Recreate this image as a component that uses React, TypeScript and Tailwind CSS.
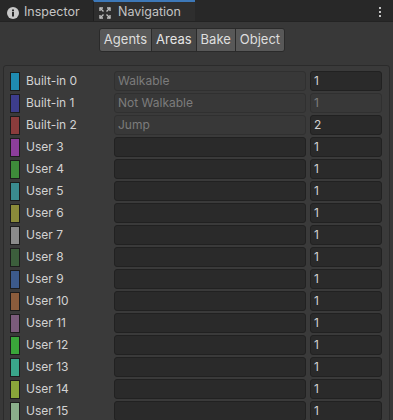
import React from "react";

type Area = {
  label: string;
  color: string;
  name?: string;
  cost: string;
  builtIn?: boolean;
  locked?: boolean;
};

const areas: Area[] = [
  { label: "Built-in 0", color: "#1f8bb1", name: "Walkable", cost: "1", builtIn: true },
  { label: "Built-in 1", color: "#3d3d8c", name: "Not Walkable", cost: "1", builtIn: true, locked: true },
  { label: "Built-in 2", color: "#8b3c3c", name: "Jump", cost: "2", builtIn: true },
  { label: "User 3", color: "#8d3e9b", cost: "1" },
  { label: "User 4", color: "#3e8b3a", cost: "1" },
  { label: "User 5", color: "#3a8b8f", cost: "1" },
  { label: "User 6", color: "#8b8b3a", cost: "1" },
  { label: "User 7", color: "#8b8b8b", cost: "1" },
  { label: "User 8", color: "#3c5e3c", cost: "1" },
  { label: "User 9", color: "#3c5a8b", cost: "1" },
  { label: "User 10", color: "#8b5c3c", cost: "1" },
  { label: "User 11", color: "#7b5b7b", cost: "1" },
  { label: "User 12", color: "#3aa63a", cost: "1" },
  { label: "User 13", color: "#3aa68a", cost: "1" },
  { label: "User 14", color: "#8aa63a", cost: "1" },
  { label: "User 15", color: "#8aae8a", cost: "1" },
];

const tabs = ["Agents", "Areas", "Bake", "Object"];

function InfoIcon() {
  return (
    <svg width="12" height="12" viewBox="0 0 12 12">
      <circle cx="6" cy="6" r="6" fill="#c8c8c8" />
      <rect x="5" y="5" width="2" height="4.5" fill="#282828" />
      <rect x="5" y="2.5" width="2" height="1.8" fill="#282828" />
    </svg>
  );
}

function NavIcon() {
  return (
    <svg width="12" height="12" viewBox="0 0 12 12" fill="none" stroke="#bdbdbd" strokeWidth="1.4">
      <path d="M1 1l3.5 3.5M11 1L7.5 4.5M1 11l3.5-3.5M11 11L7.5 7.5" />
      <path d="M1 4V1h3M8 1h3v3M1 8v3h3M8 11h3V8" />
    </svg>
  );
}

export default function App() {
  return (
    <div
      className="w-[393px] h-[420px] overflow-hidden bg-[#383838] text-[12px] text-[#d2d2d2]"
      style={{ fontFamily: "Inter, 'Noto Sans', sans-serif" }}
    >
      {/* tab bar */}
      <div className="h-[22px] flex bg-[#282828] border-b border-[#232323]">
        <div className="w-[93px] flex items-center gap-[5px] pl-[7px] pt-[4px] text-[#c4c4c4] text-[12.5px]">
          <InfoIcon />
          <span>Inspector</span>
        </div>
        <div className="w-[102px] flex items-center gap-[7px] pl-[5px] pt-[2px] bg-[#2e2e2e] border-t-2 border-[#3d78b8] text-[#c4c4c4] text-[12.5px] border-l border-l-[#1f1f1f]">
          <NavIcon />
          <span>Navigation</span>
        </div>
        <div className="flex-1 flex justify-end items-center pt-[2px] pr-[12px]">
          <div className="flex flex-col gap-[2px]">
            <span className="w-[2px] h-[2px] bg-[#c4c4c4]" />
            <span className="w-[2px] h-[2px] bg-[#c4c4c4]" />
            <span className="w-[2px] h-[2px] bg-[#c4c4c4]" />
          </div>
        </div>
      </div>

      {/* toolbar */}
      <div className="flex justify-center pr-[9px] pt-[6px]">
        <div className="flex h-[24px] rounded-[3px] overflow-hidden border border-[#2a2a2a]">
          {tabs.map((t, i) => (
            <div
              key={t}
              className={`px-[4px] flex items-center text-[13px] ${
                t === "Areas" ? "bg-[#464646] text-[#e4e4e4]" : "bg-[#585858] text-[#dedede]"
              } ${i > 0 ? "border-l border-[#2a2a2a]" : ""}`}
            >
              {t}
            </div>
          ))}
        </div>
      </div>

      {/* areas panel */}
      <div className="mx-[3px] mt-[13px] border border-[#2b2b2b] rounded-[3px] bg-[#3a3a3a] pt-[4px] pl-[6px] pr-[3px]">
        {areas.map((a) => (
          <div key={a.label} className="h-[22px] flex items-center">
            <div
              className="w-[10px] h-[19px] border border-[#1c1c1c] shrink-0"
              style={{ backgroundColor: a.color }}
            />
            <div className="w-[94px] pl-[6px] shrink-0 text-[#d2d2d2]">{a.label}</div>
            <div
              className={`w-[192px] h-[20px] rounded-[3px] border flex items-center px-[3px] shrink-0 ${
                a.builtIn ? "bg-[#383838] border-[#303030] text-[#7c7c7c]" : "bg-[#2a2a2a] border-[#212121]"
              }`}
            >
              {a.name}
            </div>
            <div
              className={`ml-[4px] w-[72px] h-[20px] rounded-[3px] border flex items-center px-[3px] shrink-0 ${
                a.locked ? "bg-[#383838] border-[#303030] text-[#7c7c7c]" : "bg-[#2a2a2a] border-[#212121] text-[#d2d2d2]"
              }`}
            >
              {a.cost}
            </div>
          </div>
        ))}
      </div>
    </div>
  );
}
